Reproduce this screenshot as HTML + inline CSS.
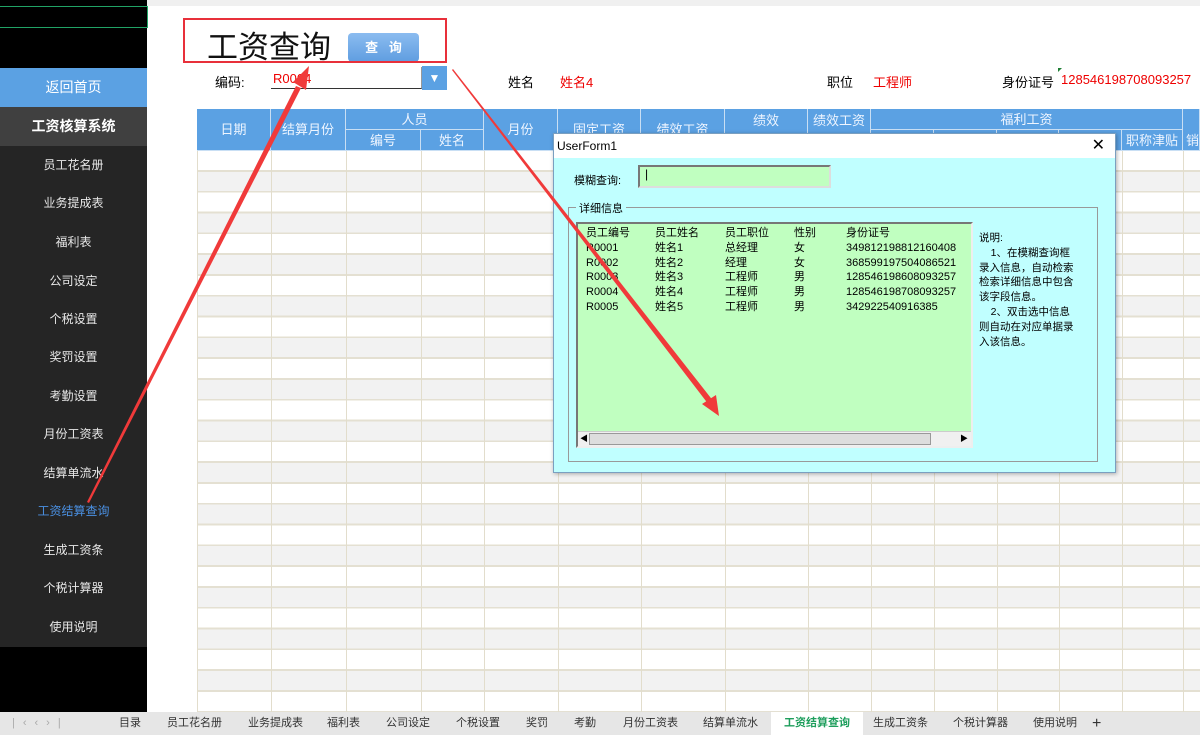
<!DOCTYPE html>
<html><head><meta charset="utf-8"><style>
*{margin:0;padding:0;box-sizing:border-box}
body{width:1200px;height:735px;overflow:hidden;position:relative;background:#fff;font-family:"Liberation Sans","Noto Sans CJK SC",sans-serif;font-size:12px}
.a{position:absolute}
.side{left:0;top:0;width:147px;height:712px;background:#000}
.it{position:absolute;left:0;width:147px;height:38px;color:#e8e8e8;text-align:center;line-height:38px;font-size:12px}
.hd{background:#5ba1e3;color:#eef5ff;text-align:center;font-size:13px;border-right:1px solid #c9dff4;border-bottom:1px solid #c9dff4;position:absolute}
.vl{position:absolute;top:151px;width:1px;height:561px;background:#e2ddcc}
.tab{position:absolute;top:712px;height:23px;line-height:23px;font-size:11px;color:#333}
</style></head><body>
<div class="a" style="left:0;top:0;width:1200px;height:6px;background:#f0f0f0"></div>
<div class="a side"></div>
<div class="a" style="left:0;top:6px;width:148px;height:22px;border:1px solid #21a366;border-left:none"></div>
<div class="it" style="top:68px;height:39px;line-height:39px;background:#5ba1e3;color:#fff;font-size:14px">返回首页</div>
<div class="it" style="top:107px;height:39px;line-height:39px;background:#404040;color:#fff;font-size:14px;font-weight:bold">工资核算系统</div>
<div class="a" style="left:0;top:146px;width:147px;height:501px;background:#252525"></div>
<div class="it" style="top:146px">员工花名册</div>
<div class="it" style="top:184px">业务提成表</div>
<div class="it" style="top:223px">福利表</div>
<div class="it" style="top:262px">公司设定</div>
<div class="it" style="top:300px">个税设置</div>
<div class="it" style="top:338px">奖罚设置</div>
<div class="it" style="top:377px">考勤设置</div>
<div class="it" style="top:415px">月份工资表</div>
<div class="it" style="top:454px">结算单流水</div>
<div class="it" style="top:492px;color:#4a90e2">工资结算查询</div>
<div class="it" style="top:531px">生成工资条</div>
<div class="it" style="top:569px">个税计算器</div>
<div class="it" style="top:608px">使用说明</div>

<div class="a" style="left:207px;top:28px;font-size:31px;color:#111;line-height:40px">工资查询</div>
<div class="a" style="left:348px;top:33px;width:71px;height:29px;background:linear-gradient(#8bbcf0,#5f9de0);border-radius:4px;color:#fff;font-size:13px;text-align:center;line-height:29px;font-weight:bold">查 &nbsp; 询</div>
<div class="a" style="left:215px;top:72px;font-size:13px">编码:</div>
<div class="a" style="left:271px;top:67px;width:151px;height:22px;border-bottom:1px solid #333;border-right:1px solid #999;color:#e00;font-size:13px;line-height:24px;padding-left:2px">R0004</div>
<div class="a" style="left:422px;top:66px;width:25px;height:24px;background:#5ba1e3;color:#fff;text-align:center;line-height:24px;font-size:12px">▼</div>
<div class="a" style="left:508px;top:72px;font-size:13px">姓名</div>
<div class="a" style="left:560px;top:72px;font-size:13px;color:#e00">姓名4</div>
<div class="a" style="left:827px;top:72px;font-size:13px">职位</div>
<div class="a" style="left:873px;top:72px;font-size:13px;color:#e00">工程师</div>
<div class="a" style="left:1002px;top:72px;font-size:13px">身份证号</div>
<div class="a" style="left:1061px;top:72px;font-size:13px;color:#e00;white-space:nowrap">128546198708093257</div>

<div class="a" style="left:197px;top:151px;width:1003px;height:561px;background:repeating-linear-gradient(#fff 0,#fff 19px,#e4e0d2 19px,#e4e0d2 20.8px,#f2f2f2 20.8px,#f2f2f2 39.8px,#e4e0d2 39.8px,#e4e0d2 41.6px)"></div>
<div class="vl" style="left:197px"></div><div class="vl" style="left:271px"></div><div class="vl" style="left:346px"></div><div class="vl" style="left:421px"></div><div class="vl" style="left:484px"></div><div class="vl" style="left:558px"></div><div class="vl" style="left:641px"></div><div class="vl" style="left:725px"></div><div class="vl" style="left:808px"></div><div class="vl" style="left:871px"></div><div class="vl" style="left:934px"></div><div class="vl" style="left:997px"></div><div class="vl" style="left:1059px"></div><div class="vl" style="left:1122px"></div><div class="vl" style="left:1183px"></div>
<div class="hd" style="left:197px;top:109px;width:74px;height:42px;line-height:42px">日期</div>
<div class="hd" style="left:271px;top:109px;width:75px;height:42px;line-height:42px">结算月份</div>
<div class="hd" style="left:346px;top:109px;width:138px;height:21px;line-height:21px">人员</div>
<div class="hd" style="left:346px;top:130px;width:75px;height:21px;line-height:21px">编号</div>
<div class="hd" style="left:421px;top:130px;width:63px;height:21px;line-height:21px">姓名</div>
<div class="hd" style="left:484px;top:109px;width:74px;height:42px;line-height:42px">月份</div>
<div class="hd" style="left:558px;top:109px;width:83px;height:42px;line-height:42px">固定工资</div>
<div class="hd" style="left:641px;top:109px;width:84px;height:42px;line-height:42px">绩效工资</div>
<div class="hd" style="left:725px;top:109px;width:83px;height:42px;line-height:24px">绩效</div>
<div class="hd" style="left:808px;top:109px;width:63px;height:42px;line-height:24px">绩效工资</div>
<div class="hd" style="left:871px;top:109px;width:312px;height:21px;line-height:21px">福利工资</div>
<div class="hd" style="left:871px;top:130px;width:63px;height:21px"></div>
<div class="hd" style="left:934px;top:130px;width:63px;height:21px"></div>
<div class="hd" style="left:997px;top:130px;width:62px;height:21px"></div>
<div class="hd" style="left:1059px;top:130px;width:63px;height:21px"></div>
<div class="hd" style="left:1122px;top:130px;width:61px;height:21px;line-height:21px">职称津贴</div>
<div class="hd" style="left:1183px;top:109px;width:17px;height:42px;line-height:64px;text-align:left;padding-left:3px;overflow:hidden">销</div>

<div class="a" style="left:553px;top:133px;width:563px;height:340px;background:#c0ffff;border:1px solid #7a9fc0;box-shadow:1px 1px 4px rgba(0,0,0,.3)">
 <div class="a" style="left:0;top:0;width:561px;height:24px;background:#fff;font-size:12px;line-height:24px;padding-left:3px">UserForm1<span style="position:absolute;right:10px;top:0;font-size:16px">✕</span></div>
 <div class="a" style="left:20px;top:38px;font-size:11px">模糊查询:</div>
 <div class="a" style="left:84px;top:31px;width:193px;height:23px;background:#c0ffc0;border:2px solid #777;border-right-color:#ddd;border-bottom-color:#ddd;font-size:12px;padding-left:5px">|</div>
 <div class="a" style="left:14px;top:73px;width:530px;height:255px;border:1px solid #999"></div>
 <div class="a" style="left:22px;top:66px;background:#c0ffff;padding:0 3px;font-size:11px">详细信息</div>
 <div class="a" style="left:22px;top:88px;width:397px;height:226px;background:#c0ffc0;border:2px solid #777;border-right-color:#eee;border-bottom-color:#eee;font-size:11px;line-height:14.8px">
  <div class="a" style="left:8px;top:2px;white-space:pre">员工编号
R0001
R0002
R0003
R0004
R0005</div>
  <div class="a" style="left:77px;top:2px;white-space:pre">员工姓名
姓名1
姓名2
姓名3
姓名4
姓名5</div>
  <div class="a" style="left:147px;top:2px;white-space:pre">员工职位
总经理
经理
工程师
工程师
工程师</div>
  <div class="a" style="left:216px;top:2px;white-space:pre">性别
女
女
男
男
男</div>
  <div class="a" style="left:268px;top:2px;white-space:pre">身份证号
349812198812160408
368599197504086521
128546198608093257
128546198708093257
342922540916385</div>
  <div class="a" style="left:0;top:207px;width:393px;height:15px;background:#f0f0f0;border-top:1px solid #ccc">
   <div class="a" style="left:2px;top:0;font-size:8px;line-height:14px">◀</div>
   <div class="a" style="left:11px;top:1px;width:342px;height:12px;background:#ddd;border:1px solid #999"></div>
   <div class="a" style="left:382px;top:0;font-size:8px;line-height:14px">▶</div>
  </div>
 </div>
 <div class="a" style="left:425px;top:97px;width:100px;font-size:10.5px;line-height:14.8px">说明:<br>&nbsp;&nbsp;&nbsp;&nbsp;1、在模糊查询框录入信息，自动检索检索详细信息中包含该字段信息。<br>&nbsp;&nbsp;&nbsp;&nbsp;2、双击选中信息则自动在对应单据录入该信息。</div>
</div>

<div class="a" style="left:0;top:712px;width:1200px;height:23px;background:#e6e6e6"></div>
<div class="tab" style="left:12px;color:#aaa;letter-spacing:8px">|‹‹›|</div>
<div class="tab" style="left:119px">目录</div>
<div class="tab" style="left:167px">员工花名册</div>
<div class="tab" style="left:248px">业务提成表</div>
<div class="tab" style="left:327px">福利表</div>
<div class="tab" style="left:386px">公司设定</div>
<div class="tab" style="left:456px">个税设置</div>
<div class="tab" style="left:526px">奖罚</div>
<div class="tab" style="left:574px">考勤</div>
<div class="tab" style="left:623px">月份工资表</div>
<div class="tab" style="left:703px">结算单流水</div>
<div class="tab" style="left:771px;width:92px;background:#fff;color:#1e9e5c;text-align:center;font-weight:bold">工资结算查询</div>
<div class="tab" style="left:873px">生成工资条</div>
<div class="tab" style="left:953px">个税计算器</div>
<div class="tab" style="left:1033px">使用说明</div>
<div class="tab" style="left:1092px;font-size:16px">+</div>

<svg class="a" style="left:0;top:0" width="1200" height="735">
 <rect x="184" y="19" width="262" height="43" fill="none" stroke="#e8303a" stroke-width="2"/>
 <polygon points="87,502 89,503 301,88 296,86" fill="#f03a3a"/>
 <polygon points="293,82 309,66 306,90" fill="#f03a3a"/>
 <polygon points="452,70 453,69 714,402 709,405" fill="#f03a3a"/>
 <polygon points="702,404 719,416 716,395" fill="#f03a3a"/>
 <polygon points="1058,68 1062,68 1058,72" fill="#1e7e34"/>
</svg>
</body></html>
